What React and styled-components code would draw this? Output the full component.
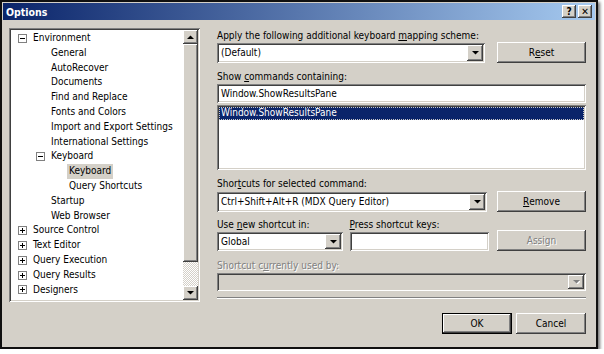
import React from "react";
import styled, { createGlobalStyle, css } from "styled-components";

const Global = createGlobalStyle`
  html, body { margin: 0; padding: 0; background: #ffffff; }
  body {
    font-family: "DejaVu Sans Condensed", "DejaVu Sans", sans-serif;
    font-size: 10px;
    color: #000;
  }
  * { box-sizing: border-box; }
`;

const raised = css`
  background: #d4d0c8;
  box-shadow: inset -1px -1px #404040, inset 1px 1px #ffffff,
    inset -2px -2px #808080, inset 2px 2px #d4d0c8;
`;

const sunken = css`
  box-shadow: inset 1px 1px #808080, inset -1px -1px #ffffff,
    inset 2px 2px #404040, inset -2px -2px #d4d0c8;
`;

const Window = styled.div`
  width: 598px;
  height: 349px;
  background: #d4d0c8;
  border: 2px solid #101010;
  padding: 1px;
  display: flex;
  flex-direction: column;
  box-shadow: 2px 2px 3px rgba(0, 0, 0, 0.55);
`;

const TitleBar = styled.div`
  height: 17px;
  flex: none;
  display: flex;
  align-items: center;
  padding: 0 3px 0 3px;
  background: linear-gradient(to right, #0a246a, #a6caf0);
`;

const TitleText = styled.div`
  flex: 1;
  color: #fff;
  font-weight: bold;
  font-size: 10.5px;
`;

const CaptionButton = styled.div`
  ${raised};
  width: 14px;
  height: 13px;
  margin-left: ${(p) => p.$gap || 0}px;
  display: flex;
  align-items: center;
  justify-content: center;
  font-weight: bold;
  font-size: 10px;
  line-height: 1;
`;

const Body = styled.div`
  flex: none;
  display: flex;
  gap: 17px;
  padding: 8px 0 0 6px;
`;

const TreeBox = styled.div`
  ${sunken};
  background: #fff;
  width: 191px;
  height: 274px;
  padding: 2px;
  display: flex;
`;

const TreeList = styled.div`
  flex: 1;
  overflow: hidden;
  padding-top: 1px;
`;

const TreeRow = styled.div`
  height: 14.8px;
  display: flex;
  align-items: center;
  padding-left: ${(p) => p.$indent}px;
  white-space: nowrap;
`;

const Expander = styled.span`
  position: relative;
  width: 9px;
  height: 9px;
  border: 1px solid #808080;
  background: #fff;
  margin-right: 6px;
  flex: none;
  &::before {
    content: "";
    position: absolute;
    left: 1px;
    top: 3px;
    width: 5px;
    height: 1px;
    background: #000;
  }
  &::after {
    content: "";
    position: absolute;
    left: 3px;
    top: 1px;
    width: 1px;
    height: 5px;
    background: #000;
    display: ${(p) => (p.$open ? "none" : "block")};
  }
`;

const TreeLabel = styled.span`
  padding: 0 2px;
  margin-left: -2px;
  line-height: 14.8px;
  background: ${(p) => (p.$selected ? "#d4d0c8" : "transparent")};
`;

const ScrollBar = styled.div`
  width: 15px;
  flex: none;
  display: flex;
  flex-direction: column;
`;

const ScrollButton = styled.div`
  ${raised};
  height: ${(p) => p.$h}px;
  flex: none;
  display: flex;
  align-items: center;
  justify-content: center;
`;

const ScrollTrack = styled.div`
  flex: 1;
  background: repeating-conic-gradient(#ffffff 0 25%, #d4d0c8 0 50%) 0 0 / 2px 2px;
`;

const Right = styled.div`
  width: 369px;
  display: flex;
  flex-direction: column;
  padding-top: 1px;
`;

const Label = styled.div`
  height: 13px;
  line-height: 13px;
  margin-top: ${(p) => p.$mt || 0}px;
  white-space: nowrap;
  color: ${(p) => (p.$disabled ? "#808080" : "#000")};
  text-shadow: ${(p) => (p.$disabled ? "1px 1px 0 #ffffff" : "none")};
`;

const Row = styled.div`
  display: flex;
  align-items: ${(p) => p.$align || "center"};
  justify-content: space-between;
  margin-top: ${(p) => p.$mt || 0}px;
`;

const Field = styled.div`
  display: flex;
  flex-direction: column;
  margin-right: ${(p) => p.$mr || 0}px;
`;

const Combo = styled.div`
  ${sunken};
  background: ${(p) => (p.$disabled ? "#d4d0c8" : "#fff")};
  width: ${(p) => p.$w}px;
  height: ${(p) => p.$h || 20}px;
  margin-top: ${(p) => p.$mt || 0}px;
  padding: 2px;
  display: flex;
  align-items: stretch;
`;

const ComboText = styled.div`
  flex: 1;
  padding-left: 2px;
  display: flex;
  align-items: center;
  white-space: nowrap;
  overflow: hidden;
`;

const DropButton = styled.div`
  ${raised};
  width: 16px;
  flex: none;
  display: flex;
  align-items: center;
  justify-content: center;
`;

const TextBox = styled.div`
  ${sunken};
  background: #fff;
  width: ${(p) => p.$w}px;
  height: ${(p) => p.$h || 19}px;
  margin-top: ${(p) => p.$mt || 0}px;
  padding: 2px 4px;
  display: flex;
  align-items: center;
  white-space: nowrap;
`;

const ListBox = styled.div`
  ${sunken};
  background: #fff;
  height: 65px;
  margin-top: 2px;
  padding: 2px;
`;

const ListItem = styled.div`
  height: 13px;
  line-height: 12px;
  padding-left: 2px;
  color: ${(p) => (p.$selected ? "#fff" : "#000")};
  background: ${(p) => (p.$selected ? "#0a246a" : "transparent")};
  outline: ${(p) => (p.$selected ? "1px dotted #c8c8c8" : "none")};
  outline-offset: -1px;
`;

const Button = styled.div`
  ${raised};
  width: ${(p) => p.$w || 89}px;
  height: 21px;
  display: flex;
  align-items: center;
  justify-content: center;
  color: ${(p) => (p.$disabled ? "#808080" : "#000")};
  text-shadow: ${(p) => (p.$disabled ? "1px 1px 0 #ffffff" : "none")};
  ${(p) =>
    p.$default &&
    css`
      box-shadow: inset 0 0 0 1px #000, inset -2px -2px #404040,
        inset 2px 2px #ffffff, inset -3px -3px #808080;
    `}
`;

const Separator = styled.div`
  height: 2px;
  margin-top: 6px;
  border-top: 1px solid #808080;
  border-bottom: 1px solid #ffffff;
`;

const Footer = styled.div`
  display: flex;
  justify-content: flex-end;
  gap: 4px;
  padding: 11px 9px 0 0;
`;

const Arrow = ({ dir = "down", disabled }) => (
  <svg width="7" height="4" viewBox="0 0 7 4">
    {disabled && (
      <polygon
        points={dir === "down" ? "1,1 8,1 4.5,4.5" : "1,4 8,4 4.5,0.5"}
        fill="#ffffff"
      />
    )}
    <polygon
      points={dir === "down" ? "0,0 7,0 3.5,3.5" : "0,4 7,4 3.5,0.5"}
      fill={disabled ? "#808080" : "#000"}
    />
  </svg>
);

const treeItems = [
  { t: "Environment", l: 0, e: "open" },
  { t: "General", l: 1 },
  { t: "AutoRecover", l: 1 },
  { t: "Documents", l: 1 },
  { t: "Find and Replace", l: 1 },
  { t: "Fonts and Colors", l: 1 },
  { t: "Import and Export Settings", l: 1 },
  { t: "International Settings", l: 1 },
  { t: "Keyboard", l: 1, e: "open" },
  { t: "Keyboard", l: 2, sel: true },
  { t: "Query Shortcuts", l: 2 },
  { t: "Startup", l: 1 },
  { t: "Web Browser", l: 1 },
  { t: "Source Control", l: 0, e: "closed" },
  { t: "Text Editor", l: 0, e: "closed" },
  { t: "Query Execution", l: 0, e: "closed" },
  { t: "Query Results", l: 0, e: "closed" },
  { t: "Designers", l: 0, e: "closed" },
];

export default function App() {
  return (
    <>
      <Global />
      <Window>
        <TitleBar>
          <TitleText>Options</TitleText>
          <CaptionButton>?</CaptionButton>
          <CaptionButton $gap={2}>✕</CaptionButton>
        </TitleBar>
        <Body>
          <TreeBox>
            <TreeList>
              {treeItems.map((it, i) => {
                const textX = 22 + it.l * 18;
                return (
                  <TreeRow key={i} $indent={it.e ? textX - 15 : textX}>
                    {it.e && <Expander $open={it.e === "open"} />}
                    <TreeLabel $selected={it.sel}>{it.t}</TreeLabel>
                  </TreeRow>
                );
              })}
            </TreeList>
            <ScrollBar>
              <ScrollButton $h={14}>
                <Arrow dir="up" />
              </ScrollButton>
              <ScrollButton $h={218} />
              <ScrollTrack />
              <ScrollButton $h={14}>
                <Arrow dir="down" />
              </ScrollButton>
            </ScrollBar>
          </TreeBox>
          <Right>
            <Label>
              Apply the following additional keyboard <u>m</u>apping scheme:
            </Label>
            <Row>
              <Combo $w={268}>
                <ComboText>(Default)</ComboText>
                <DropButton>
                  <Arrow />
                </DropButton>
              </Combo>
              <Button>
                R<u>e</u>set
              </Button>
            </Row>
            <Label $mt={7}>
              Show <u>c</u>ommands containing:
            </Label>
            <TextBox $w={369} $mt={1}>
              Window.ShowResultsPane
            </TextBox>
            <ListBox>
              <ListItem $selected>Window.ShowResultsPane</ListItem>
            </ListBox>
            <Label $mt={7}>
              Shor<u>t</u>cuts for selected command:
            </Label>
            <Row $mt={1}>
              <Combo $w={270}>
                <ComboText>Ctrl+Shift+Alt+R (MDX Query Editor)</ComboText>
                <DropButton>
                  <Arrow />
                </DropButton>
              </Combo>
              <Button>
                <u>R</u>emove
              </Button>
            </Row>
            <Row $mt={6} $align="flex-end">
              <Field $mr={6}>
                <Label>
                  Use <u>n</u>ew shortcut in:
                </Label>
                <Combo $w={126} $mt={1} $h={19}>
                  <ComboText>Global</ComboText>
                  <DropButton>
                    <Arrow />
                  </DropButton>
                </Combo>
              </Field>
              <Field $mr={8}>
                <Label>
                  <u>P</u>ress shortcut keys:
                </Label>
                <TextBox $w={139} $mt={1} />
              </Field>
              <Button $disabled>Assign</Button>
            </Row>
            <Label $mt={8} $disabled>
              Shortcut c<u>u</u>rrently used by:
            </Label>
            <Combo $w={369} $mt={1} $h={18} $disabled>
              <ComboText />
              <DropButton>
                <Arrow disabled />
              </DropButton>
            </Combo>
            <Separator />
          </Right>
        </Body>
        <Footer>
          <Button $w={70} $default>
            OK
          </Button>
          <Button $w={70}>Cancel</Button>
        </Footer>
      </Window>
    </>
  );
}
